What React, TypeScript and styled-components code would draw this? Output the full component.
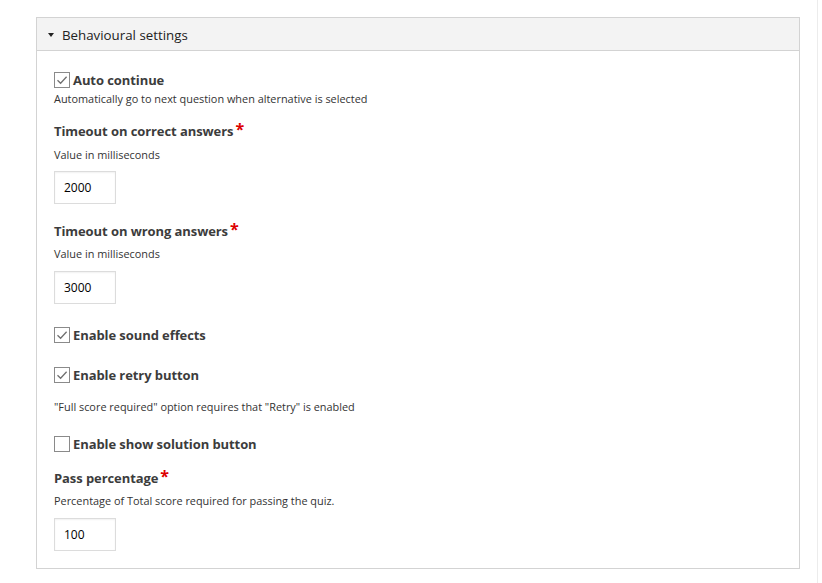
import React from "react";
import styled, { createGlobalStyle } from "styled-components";

const Global = createGlobalStyle`
  html, body { margin: 0; padding: 0; background: #fff; }
  body { font-family: "Open Sans", "Noto Sans", sans-serif; color: #333; }
  * { box-sizing: border-box; }
`;

const Page = styled.div`
  width: 818px;
  min-height: 583px;
  border-right: 1px solid #ececec;
  padding: 17px 0 0 36px;
`;

const Fieldset = styled.section`
  width: 764px;
  border: 1px solid #d3d3d3;
  background: #fff;
`;

const Header = styled.div`
  height: 33px;
  background: #f3f3f3;
  border-bottom: 1px solid #d3d3d3;
  display: flex;
  align-items: center;
  padding: 1px 0 0 11px;
  gap: 8px;
  font-size: 13.3px;
  color: #222;
`;

const Caret = styled.span`
  width: 0;
  height: 0;
  border-left: 3.5px solid transparent;
  border-right: 3.5px solid transparent;
  border-top: 4px solid #222;
  margin-top: 1px;
`;

const Content = styled.div`
  padding: 20px 17px 17px;
  display: flex;
  flex-direction: column;
`;

const Field = styled.div<{ $mt?: number }>`
  margin-top: ${(p) => p.$mt ?? 0}px;
  display: flex;
  flex-direction: column;
  align-items: flex-start;
`;

const Label = styled.div`
  font-weight: 700;
  font-size: 13px;
  line-height: 18px;
  color: #3c3c3c;
  letter-spacing: -0.08px;
  display: flex;
  align-items: flex-start;
`;

const Required = styled.span`
  color: #d00;
  font-size: 16px;
  line-height: 14px;
  margin-left: 2px;
  font-weight: 700;
`;

const Description = styled.div<{ $mt?: number }>`
  font-size: 10.9px;
  line-height: 16px;
  color: #333;
  margin-top: ${(p) => p.$mt ?? 0}px;
`;

const TextInput = styled.input<{ $mt?: number }>`
  width: 62px;
  height: 33px;
  margin-top: ${(p) => p.$mt ?? 0}px;
  border: 1px solid #dcdcdc;
  background: #fff;
  box-shadow: inset 0 1px 2px rgba(0, 0, 0, 0.06);
  padding: 0 9px;
  font-family: "Open Sans", sans-serif;
  font-size: 12px;
  color: #000;
  outline: none;
`;

const CheckRow = styled.label`
  display: flex;
  align-items: center;
  gap: 3px;
  height: 18px;
`;

const Box = styled.span`
  width: 16px;
  height: 16px;
  border: 1px solid #8a8a8a;
  background: #fff;
  display: flex;
  align-items: center;
  justify-content: center;
`;

const Check = ({ checked }: { checked: boolean }) => (
  <Box>
    {checked && (
      <svg width="12" height="10" viewBox="0 0 12 10">
        <path d="M1.5 5.2 L4.6 8.2 L10.6 1.8" fill="none" stroke="#707070" strokeWidth="1.3" />
      </svg>
    )}
  </Box>
);

const CheckField = ({ checked, label }: { checked: boolean; label: string }) => (
  <CheckRow>
    <Check checked={checked} />
    <Label>{label}</Label>
  </CheckRow>
);

export default function App() {
  return (
    <>
      <Global />
      <Page>
        <Fieldset>
          <Header>
            <Caret />
            <span>Behavioural settings</span>
          </Header>
          <Content>
            <Field>
              <CheckField checked label="Auto continue" />
              <Description $mt={2}>Automatically go to next question when alternative is selected</Description>
            </Field>
            <Field $mt={15}>
              <Label>
                Timeout on correct answers<Required>*</Required>
              </Label>
              <Description $mt={7}>Value in milliseconds</Description>
              <TextInput $mt={8} defaultValue="2000" />
            </Field>
            <Field $mt={18}>
              <Label>
                Timeout on wrong answers<Required>*</Required>
              </Label>
              <Description $mt={6}>Value in milliseconds</Description>
              <TextInput $mt={9} defaultValue="3000" />
            </Field>
            <Field $mt={22}>
              <CheckField checked label="Enable sound effects" />
            </Field>
            <Field $mt={22}>
              <CheckField checked label="Enable retry button" />
              <Description $mt={15}>"Full score required" option requires that "Retry" is enabled</Description>
            </Field>
            <Field $mt={20}>
              <CheckField checked={false} label="Enable show solution button" />
            </Field>
            <Field $mt={16}>
              <Label>
                Pass percentage<Required>*</Required>
              </Label>
              <Description $mt={6}>Percentage of Total score required for passing the quiz.</Description>
              <TextInput $mt={9} defaultValue="100" />
            </Field>
          </Content>
        </Fieldset>
      </Page>
    </>
  );
}
